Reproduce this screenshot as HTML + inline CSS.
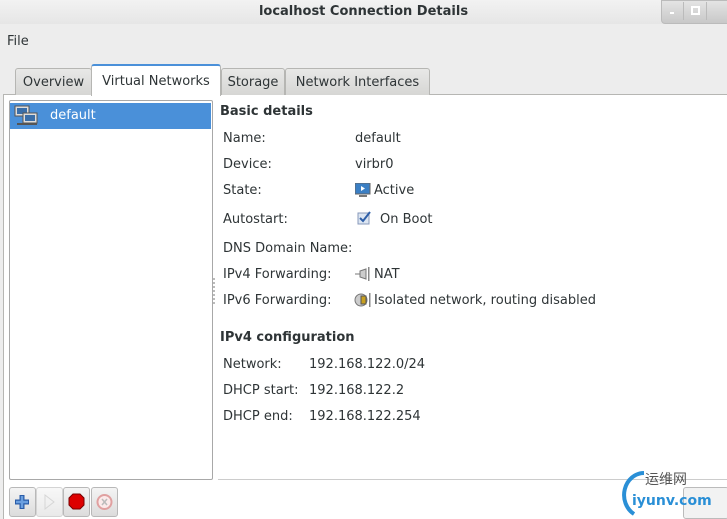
<!DOCTYPE html>
<html><head><style>
body{margin:0;width:727px;height:518px;overflow:hidden;background:#ededed;font-family:"DejaVu Sans","Liberation Sans",sans-serif;font-size:13px;color:#2e3436;position:relative;line-height:19px}
.a{position:absolute;white-space:nowrap}
.tab{position:absolute;top:68px;height:27px;border:1px solid #b6b6b3;border-bottom:none;background:linear-gradient(#e8e8e7,#d6d6d4);border-radius:3px 3px 0 0;line-height:28px;text-align:center;box-sizing:border-box}
.btn{position:absolute;top:487px;width:36px;height:30px;border:1px solid #b8b8b8;border-radius:3px;background:linear-gradient(#f4f4f4,#dcdcdc);box-sizing:border-box;line-height:0}
</style></head><body>
<div class="a" style="left:0;top:0;width:727px;height:24px;background:linear-gradient(#f2f2f2,#e6e6e6)"></div>
<div class="a" style="left:0;top:2px;width:727px;text-align:center;font-weight:bold;font-size:13px">localhost Connection Details</div>
<div class="a" style="left:661px;top:0;width:66px;height:22px;background:linear-gradient(#e4e4e4,#c8c8c8);border:1px solid #bbb;border-radius:0 0 0 4px"></div>
<div class="a" style="left:683px;top:2px;width:1px;height:18px;background:#bbb"></div>
<div class="a" style="left:706px;top:2px;width:1px;height:18px;background:#bbb"></div>
<div class="a" style="left:670px;top:12px;width:4px;height:2px;background:#fff"></div>
<div class="a" style="left:691px;top:6px;width:5px;height:5px;border:2px solid #fff"></div>
<div class="a" style="left:7px;top:32px">File</div>
<div class="a" style="left:3px;top:94px;width:724px;height:424px;background:#fff;border-top:1px solid #b6b6b3;border-left:1px solid #b6b6b3"></div>
<div class="tab" style="left:15px;width:77px">Overview</div>
<div class="tab" style="left:91px;width:130px;top:64px;height:32px;background:#fff;border-top:2px solid #4a90d9;line-height:32px;z-index:2">Virtual Networks</div>
<div class="tab" style="left:221px;width:64px">Storage</div>
<div class="tab" style="left:285px;width:145px">Network Interfaces</div>
<div class="a" style="left:9px;top:100px;width:202px;height:378px;border:1px solid #a8a8a8;border-radius:2px;background:#fff"></div>
<div class="a" style="left:10px;top:103px;width:201px;height:26px;background:#4a90d9"></div>
<svg class="a" style="left:14px;top:105px" width="26" height="22"><rect x="1" y="1" width="14" height="10" fill="#ddd" stroke="#555"/><rect x="3" y="3" width="10" height="6" fill="#3a6ea8"/><rect x="9" y="8" width="14" height="10" fill="#ddd" stroke="#555"/><rect x="11" y="10" width="10" height="6" fill="#3a6ea8"/><rect x="3" y="18" width="20" height="2" fill="#555"/></svg>
<div class="a" style="left:50px;top:106px;color:#fff">default</div>
<div class="a" style="left:213px;top:278px;width:2px;height:26px;border-left:2px dotted #bbb"></div>
<div class="a" style="left:220px;top:102px;font-weight:bold">Basic details</div>
<div class="a" style="left:223px;top:129px">Name:</div><div class="a" style="left:355px;top:129px">default</div>
<div class="a" style="left:223px;top:155px">Device:</div><div class="a" style="left:355px;top:155px">virbr0</div>
<div class="a" style="left:223px;top:181px">State:</div>
<svg class="a" style="left:355px;top:183px" width="16" height="15"><rect x="0" y="0" width="15" height="11" fill="#3b7fc4" stroke="#666"/><polygon points="6,3 10,5.5 6,8" fill="#fff"/><rect x="4" y="12" width="8" height="2" fill="#777"/></svg>
<div class="a" style="left:374px;top:181px">Active</div>
<div class="a" style="left:223px;top:210px">Autostart:</div>
<svg class="a" style="left:357px;top:211px" width="15" height="14"><rect x="1" y="2" width="11" height="11" fill="#dde6f2" stroke="#8899bb"/><path d="M3 7 L6 10 L13 1" stroke="#2f5fa8" stroke-width="2" fill="none"/></svg>
<div class="a" style="left:380px;top:210px">On Boot</div>
<div class="a" style="left:223px;top:239px">DNS Domain Name:</div>
<div class="a" style="left:223px;top:265px">IPv4 Forwarding:</div>
<svg class="a" style="left:354px;top:266px" width="18" height="16"><path d="M1 8 L6 8 M6 5 L12 3 L12 13 L6 11 Z" stroke="#777" fill="#ccc"/><rect x="14" y="1" width="1.5" height="14" fill="#888"/></svg>
<div class="a" style="left:374px;top:265px">NAT</div>
<div class="a" style="left:223px;top:291px">IPv6 Forwarding:</div>
<svg class="a" style="left:354px;top:292px" width="18" height="16"><circle cx="7" cy="8" r="6" fill="#ccc" stroke="#777"/><rect x="7" y="4" width="5" height="8" fill="#c8a020" stroke="#555"/><rect x="15" y="1" width="1.5" height="14" fill="#888"/></svg>
<div class="a" style="left:374px;top:291px">Isolated network, routing disabled</div>
<div class="a" style="left:220px;top:328px;font-weight:bold">IPv4 configuration</div>
<div class="a" style="left:223px;top:355px">Network:</div><div class="a" style="left:309px;top:355px">192.168.122.0/24</div>
<div class="a" style="left:223px;top:381px">DHCP start:</div><div class="a" style="left:309px;top:381px">192.168.122.2</div>
<div class="a" style="left:223px;top:407px">DHCP end:</div><div class="a" style="left:309px;top:407px">192.168.122.254</div>
<div class="a" style="left:218px;top:479px;width:509px;height:1px;background:#ccc"></div>
<div class="btn" style="left:9px;width:27px"><svg width="25" height="28"><path d="M12 7 V21 M5 14 H19" stroke="#2a5ca8" stroke-width="5"/><path d="M12 8 V20 M6 14 H18" stroke="#6a9fe0" stroke-width="2.5"/></svg></div>
<div class="btn" style="left:36px;width:27px;opacity:.6"><svg width="25" height="28"><polygon points="8,7 17,14 8,21" fill="none" stroke="#bbb"/></svg></div>
<div class="btn" style="left:63px;width:27px"><svg width="25" height="28"><polygon points="9,6 16,6 20,10 20,17 16,21 9,21 5,17 5,10" fill="#d00" stroke="#700"/></svg></div>
<div class="btn" style="left:91px;width:27px"><svg width="25" height="28"><circle cx="12.5" cy="14" r="7" fill="#fbeaea" stroke="#e0a0a0" stroke-width="2"/><path d="M10 11 L15 17 M15 11 L10 17" stroke="#bbb" stroke-width="1.5"/></svg></div>
<div class="a" style="left:683px;top:487px;width:44px;height:30px;border:1px solid #bbb;border-radius:3px;background:#f2f2f2"></div>
<svg class="a" style="left:620px;top:470px" width="30" height="48"><path d="M24 3 A20 22 0 0 0 14 44" stroke="#2a8fd6" stroke-width="4" fill="none"/></svg>
<div class="a" style="left:645px;top:470px;font-family:'Noto Sans CJK SC',sans-serif;font-size:14px;color:#555">运维网</div>
<div class="a" style="left:632px;top:492px;font-size:14px;font-weight:bold;color:#2a8fd6">iyunv.com</div>
</body></html>
